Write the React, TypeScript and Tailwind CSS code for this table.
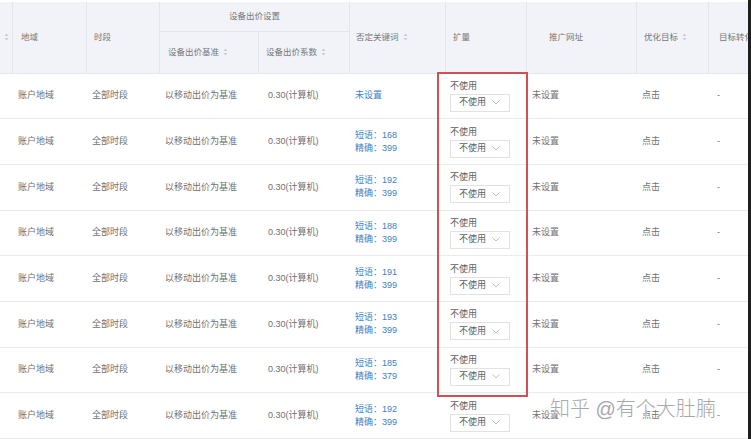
import React from 'react';

const cols = 'grid grid-cols-[12px_74px_73px_99px_91px_96px_81px_110px_72px_40px]';

const rows = [
  null,
  ['168', '399'],
  ['192', '399'],
  ['188', '399'],
  ['191', '399'],
  ['193', '399'],
  ['185', '379'],
  ['192', '399'],
];

const SortIcon = () => (
  <svg width="5" height="8" viewBox="0 0 5 8" className="ml-[4px] inline-block shrink-0">
    <path d="M2.5 0.5 L4.5 3 L0.5 3 Z" fill="#c8ccd4" />
    <path d="M2.5 7.5 L4.5 5 L0.5 5 Z" fill="#c8ccd4" />
  </svg>
);

const Chevron = () => (
  <svg width="8" height="5" viewBox="0 0 8 5" className="shrink-0">
    <polyline points="0.5,0.5 4,4 7.5,0.5" fill="none" stroke="#b8b8b8" strokeWidth="0.9" />
  </svg>
);

const Th: React.FC<{ className?: string; children?: React.ReactNode; sort?: boolean }> = ({ className = '', children, sort }) => (
  <div className={`flex items-center border-l border-[#e2e6ee] text-[8.5px] text-[#777] ${className}`}>
    {children}
    {sort && <SortIcon />}
  </div>
);

export default function App() {
  return (
    <div
      className="relative w-[751px] h-[439px] overflow-hidden bg-white flex"
      style={{ fontFamily: '"Liberation Sans", "Noto Sans CJK SC", sans-serif' }}
    >
      <div className="w-[748px] flex flex-col">
        {/* Header */}
        <div className="h-[4px] bg-white" />
        <div className={`${cols} grid-rows-[30px_41px] bg-[#f1f3f8] border-b border-[#e2e6ee]`}>
          <div className="row-span-2 flex items-center justify-center pr-[4px]">
            <SortIcon />
          </div>
          <Th className="row-span-2 pl-[8px]">地域</Th>
          <Th className="row-span-2 pl-[7px]">时段</Th>
          <Th className="col-span-2 justify-center border-b">设备出价设置</Th>
          <Th className="row-span-2 pl-[6px]" sort>否定关键词</Th>
          <Th className="row-span-2 pl-[7px]">扩量</Th>
          <Th className="row-span-2 pl-[22px]">推广网址</Th>
          <Th className="row-span-2 pl-[7px]" sort>优化目标</Th>
          <Th className="row-span-2 pl-[10px] whitespace-nowrap overflow-hidden">目标转化</Th>
          <Th className="pl-[8px]" sort>设备出价基准</Th>
          <Th className="pl-[7px]" sort>设备出价系数</Th>
        </div>

        {/* Body */}
        {rows.map((kw, i) => (
          <div
            key={i}
            className={`${cols} h-[45.7px] shrink-0 border-b border-[#ebebeb] text-[9px] leading-[13px] text-[#707070]`}
          >
            <div />
            <div className="flex items-center pl-[6px]">账户地域</div>
            <div className="flex items-center pl-[6px]">全部时段</div>
            <div className="flex items-center pl-[6px]">以移动出价为基准</div>
            <div className="flex items-center pl-[10px]">0.30(计算机)</div>
            <div className="flex flex-col justify-center pl-[6px] text-[#3b7fc6]">
              {kw ? (
                <>
                  <span>短语：{kw[0]}</span>
                  <span>精确：{kw[1]}</span>
                </>
              ) : (
                <span>未设置</span>
              )}
            </div>
            <div className="flex flex-col justify-center pl-[5px] text-[#606060]">
              <span>不使用</span>
              <div className="mt-[1px] flex h-[18px] w-[60px] items-center justify-between border border-[#e2e2e2] bg-white pl-[8px] pr-[9px]">
                <span>不使用</span>
                <Chevron />
              </div>
            </div>
            <div className="flex items-center pl-[6px]">未设置</div>
            <div className="flex items-center pl-[6px]">点击</div>
            <div className="flex items-center pl-[9px]">-</div>
          </div>
        ))}
      </div>
      <div className="w-[3px] bg-[#1e1e1e]" />

      {/* red highlight */}
      <div className="absolute left-[437px] top-[72px] w-[91px] h-[325px] border-2 border-[#d44f53]" />

      {/* watermark */}
      <div
        className="absolute left-[550px] top-[396px] text-[20px] font-light leading-[26px] text-[#a8a8a8] whitespace-nowrap"
        style={{ textShadow: '0 0 2px #fff, 0 0 2px #fff' }}
      >
        知乎 @有个大肚腩
      </div>
    </div>
  );
}
